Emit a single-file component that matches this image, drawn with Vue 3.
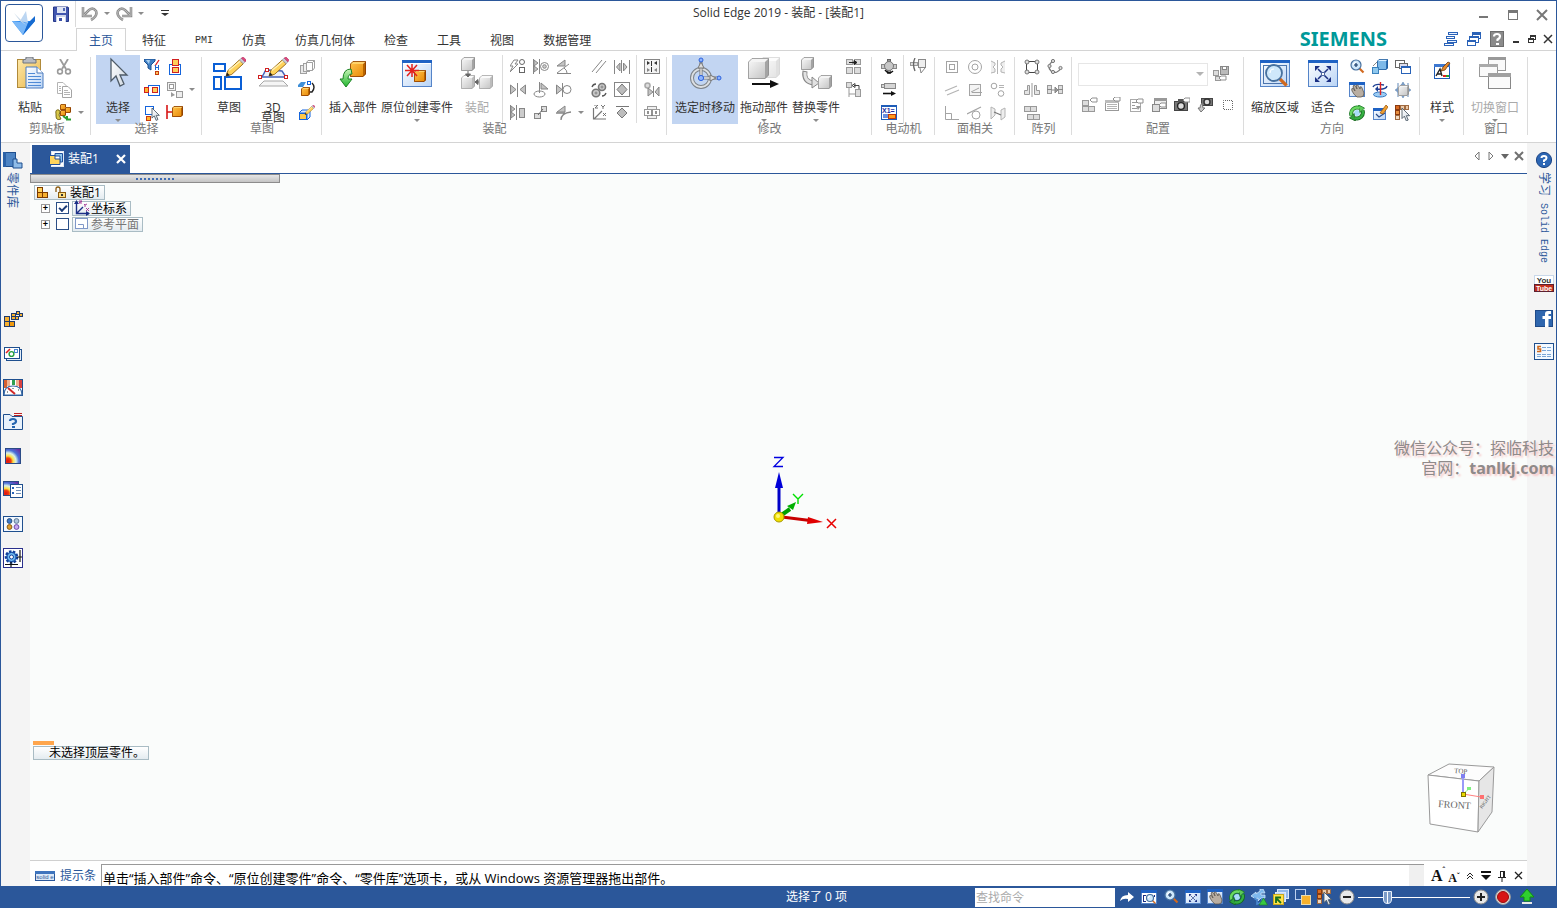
<script setup>
import { h, ref } from 'vue'

/* ---- drawing helpers for the icon set ---- */
const R = (x, y, w, hh, f = 'none', s = 'none', sw = 1) =>
  `<rect x="${s === 'none' ? x : x + sw / 2}" y="${s === 'none' ? y : y + sw / 2}" width="${s === 'none' ? w : w - sw}" height="${s === 'none' ? hh : hh - sw}" fill="${f}" stroke="${s}" stroke-width="${sw}"/>`
const P = (d, f = 'none', s = 'none', sw = 1) => `<path d="${d}" fill="${f}" stroke="${s}" stroke-width="${sw}"/>`
const C = (x, y, r, f = 'none', s = 'none', sw = 1) => `<circle cx="${x}" cy="${y}" r="${r}" fill="${f}" stroke="${s}" stroke-width="${sw}"/>`
const pal = {
  o: ['#ffd36a', 'url(#gO)', '#b86500', '#8a3a00'],
  g: ['#f4f4f4', 'url(#gG)', '#a4a4a4', '#909090'],
  b: ['#d9efff', '#7db9e8', '#2a6fb5', '#1f5c9c'],
  w: ['#fafafa', 'url(#gG)', '#bcbcbc', '#a6a6a6']
}
const cube = (x, y, s, k) => {
  const [a, b, c, d] = pal[k]
  const t = Math.round(s / 5)
  return P(`M${x + t} ${y}H${x + s}L${x + s - t} ${y + t}H${x}z`, a) +
    P(`M${x + s} ${y}V${y + s - t}L${x + s - t} ${y + s}V${y + t}z`, c) +
    P(`M${x} ${y + t}H${x + s - t}V${y + s}H${x}z`, b) +
    P(`M${x + t} ${y + .5}H${x + s - .5}V${y + s - t}L${x + s - t} ${y + s - .5}H${x + .5}V${y + t}z`, 'none', d, .8)
}
const pencil = (x, y, s) => `<g transform="translate(${x} ${y}) scale(${s})">` +
  P('M0 18L2 12L14 1L18 5L6 16z', '#ffd35c', '#9a6a12', 1) + P('M3 12L15 2', 'none', '#fff2b8', 1.4) +
  P('M14 1L16 -1L20 3L18 5z', '#c9c9d6', '#8b8b9b', .6) + P('M16 -1L18 -2L21 1L20 3z', '#e0467c', '#b02a5c', .6) + P('M0 18L1 14L4 17z', '#222') + '</g>'
const win = (x, y, w, hh) => R(x, y, w, hh, 'url(#gB)', '#5584c8') + R(x, y, w, 3, '#1f62c4')
const lens = (x, y, r, k) => P(`M${x + r * .7} ${y + r * .7}L${x + r * .7 + k} ${y + r * .7 + k}`, 'none', '#d2691e', r / 2.4) + C(x, y, r, '#cfe8fb', '#47719f', r > 6 ? 1.8 : 1.2) + P(`M${x - r * .5} ${y}A${r * .5} ${r * .5} 0 0 1 ${x} ${y - r * .5}`, 'none', '#fff', 1.2)
const cursor = (x, y, s) => `<g transform="translate(${x} ${y}) scale(${s})">` + P('M0 0V22L5 17L9 27L13 25L9 16H16z', 'url(#gW)', '#4e5b68', 1.3 / Math.sqrt(s)) + '</g>'
const G = '#868686', L = '#b4b4b4'
const tri = (d) => P(d, '#c4c4c4', G)
const tagR = (x, y) => P(`M${x} ${y + 2}L${x + 2} ${y}H${x + 7}V${y + 4}H${x + 2}z`, '#fff', '#8f8f8f')
const swirl = C(8, 8, 3, '#a8dcf8') +
  P('M2.500 10.500A6 6 0 0 1 10.500 3', 'none', '#1c7a26', 4) + P('M9.500 0L15.500 3L11 7.500z', '#5ccb58', '#1c7a26', .8) + P('M2.500 10.500A6 6 0 0 1 10.500 3', 'none', '#6ad862', 2.4) +
  P('M13.500 5.500A6 6 0 0 1 5.500 13', 'none', '#14661c', 4) + P('M6.500 16L.5 13L5 8.500z', '#2ea33a', '#14661c', .8) + P('M13.500 5.500A6 6 0 0 1 5.500 13', 'none', '#35b042', 2.4)
const hand = P('M3 9Q2 6 4 6L6 9L4 4Q5 2.500 6.500 4L8 7L7 3.500Q8.500 2 9.500 4L11 7L11 5Q12.500 4 13 6L15 11Q15 15 12 15H8Q5 13 3 9z', '#b9aea2', '#5c554e', .8)
const fitArrows = (x, y, s) => `<g transform="translate(${x} ${y}) scale(${s})">` + P('M3 3L13 13M13 3L3 13', 'none', '#1b2f83', 1.5) + P('M0 0H5L0 5zM16 0H11L16 5zM0 16H5L0 11zM16 16H11L16 11z', '#1b2f83') + R(6, 6, 4, 4, '#fff', '#4d67a0') + '</g>'

const art = {
  logo: [26, P('M4 6L15 17L12 14L9 11z', '#d5e4f5') + P('M1 11H24L12 25z', '#2d8cf0') + P('M1 11L17 13L12 25z', '#7ab8f8') + P('M15 1L9 11L17 13z', '#bcd6f2') + P('M17 13L24 6V11L12 25z', '#176bd0') + P('M3 3L9 11L15 15z', '#c8d8e8')],
  save: [16, P('M.5 1H15L15.500 2V15.500H.5z', '#4055ae', '#26388a') + R(4, 1, 9, 6, '#dfe5f4') + R(10, 2, 2, 3, '#5168b4') + R(3, 9, 10, 7, '#cdd5ec') + R(4, 11, 8, 5, '#fff') + R(6, 12, 3, 3, '#3c50a8')],
  undo: [18, P('M2 2V11H11M3 10L8 5Q12 2 15 6Q17 11 10 15', 'none', '#8d8d8d', 2.6) + P('M2 2V11H11M3 10L8 5Q12 2 15 6Q17 11 10 15', 'none', '#b9b9b9', 1)],
  redo: [18, P('M16 2V11H7M15 10L10 5Q6 2 3 6Q1 11 8 15', 'none', '#8d8d8d', 2.6) + P('M16 2V11H7M15 10L10 5Q6 2 3 6Q1 11 8 15', 'none', '#b9b9b9', 1)],
  custom: [8, P('M0 .5H8', 'none', '#333', 1) + P('M0 3H8L4 6z', '#333')],
  caret: [6, P('M0 1H6L3 4z', '#8c8c8c')],
  caretl: [8, P('M0 2H8L4 6z', '#b4b4b4')],
  min: [12, R(1, 7, 9, 2, '#777')],
  max: [12, R(1, 1, 10, 10, 'none', '#777') + R(1, 1, 10, 3, '#777')],
  close: [12, P('M1 1L11 11M11 1L1 11', 'none', '#777', 2)],
  casc1: [16, R(5, 1, 10, 3, '#eaf2ff', '#2a62b8') + R(3, 5, 9, 3, '#fff', '#2a62b8') + R(4, 9, 10, 3, '#eaf2ff', '#2a62b8') + R(1, 12, 10, 3, '#fff', '#2a62b8')],
  casc2: [16, R(6, 1, 9, 7, '#fff', '#2a62b8') + R(6, 1, 9, 3, '#2a62b8') + R(3, 5, 10, 7, '#fff', '#2a62b8') + R(3, 5, 10, 2, '#2a62b8') + R(1, 9, 9, 6, '#fff', '#2a62b8') + R(1, 9, 9, 2, '#2a62b8')],
  help: [16, R(1, 0, 14, 16, '#8b8b8b', '#6d6d6d') + P('M5 5.500Q5 3 8 3Q11 3 11 5.500Q11 7 8.500 8.500V10', 'none', '#fff', 2.2) + R(7, 12, 3, 2, '#fff')],
  min2: [10, R(2, 7, 6, 2, '#333')],
  rest2: [10, R(3, 1, 6, 5, '#fff', '#333') + R(3, 1, 6, 2, '#333') + R(1, 4, 6, 5, '#fff', '#333') + R(1, 4, 6, 2, '#333')],
  close2: [10, P('M1 1L9 9M9 1L1 9', 'none', '#333', 1.5)],

  paste: [32, R(3, 2, 24, 29, 'url(#gClip)', '#b08a3a') + P('M9 6V3L12 2V0H19V2L22 3V6z', '#b9bcc2', '#6f757d') + P('M12 10H23L29 16V31H12z', 'url(#gB)', '#4a7bbd') + P('M23 10V16H29', '#fff', '#4a7bbd') + P('M14 16.500H21M14 19.500H27M14 22.500H27M14 25.500H27M14 28.500H27', 'none', '#4f8ad6')],
  cut: [16, P('M4 0L10 10M12 0L6 10', 'none', '#9b9b9b', 1.8) + C(4, 12.5, 2.4, 'none', '#9b9b9b', 1.6) + C(12, 12.5, 2.4, 'none', '#9b9b9b', 1.6)],
  copy: [16, P('M1.500 .5H7L10.500 4V11.500H1.500z', '#fff', L) + P('M6.500 4.500H12L15.500 8V15.500H6.500z', '#fff', '#a5a5a5') + P('M8 8.500H12M8 10.500H14M8 12.500H14M3 4.500H5M3 6.500H5M3 8.500H5', 'none', L)],
  partcopy: [17, cube(5, 0, 6, 'o') + cube(10, 3, 6, 'o') + cube(5, 6, 6, 'o') + P('M1 10Q0 5 4 6Q6 7 4 11L6 15Q1 17 1 12z', '#d8c84a', '#6b5c10', .9) + P('M8 12L12 15M12 12V15.500H16', 'none', '#2b9e30', 2)],
  cursor: [32, cursor(9, 2, 1)],
  filter: [16, P('M0 0H11V2L7 6V11L4 9V6L0 2z', '#3f7fc4', '#1d4f8e') + P('M2 1H6L5 5z', '#a8d0f2') + P('M15 1L11 7', 'none', '#e02020', 1.3) + P('M11.500 6V11M14.500 6V11M11 8.500H15', 'none', '#1f6ad2') + R(11, 12, 4, 4, '#ffc35c', '#c33c10')],
  selstack: [16, R(2, 5, 12, 11, '#fff', '#1464dc') + R(5, 0, 7, 7, '#ffcf5a', '#d02020') + R(5, 8, 7, 6, '#ffcf5a', '#d02020')],
  selrow: [16, R(4, 3, 12, 11, '#fff', '#1464dc') + R(0, 5, 5, 6, '#ffb62e', '#d02020') + R(8, 5, 6, 6, '#ffcf5a', '#d02020')],
  selgrey: [16, R(0, 0, 9, 9, '#f4f4f4', '#999') + R(2, 2, 5, 5, '#fff', '#999') + R(9, 9, 7, 7, '#eee', '#999') + P('M4 10L8 13L4 15z', '#999')],
  selcur: [16, R(1, 1, 9, 9, '#fff', '#1464dc', 1) + R(2, 11, 5, 5, '#ffb62e', '#c83a10') + cursor(8, 3, .46)],
  selcube: [17, P('M1 1V15M1 8H6', 'none', '#d81616', 1.6) + cube(6, 2, 11, 'o')],
  sketch: [34, R(1, 6, 13, 9, '#fff', '#0a5fd6', 2) + R(1, 19, 9, 14, '#fff', '#0a5fd6', 2) + R(12, 19, 18, 14, '#fff', '#0a5fd6', 2) + pencil(14, 2, .96)],
  sketch3d: [32, P('M7 24H26L31 29H2z', '#f5f5f5', '#a8a8a8') + P('M3 20Q6 20 8 14L12 13L25 14L29 20z', '#eceff8', '#4763b8', 1.4) + R(1, 18, 4, 4, '#fff', '#d02020') + R(27, 18, 4, 4, '#fff', '#d02020') + R(8, 11, 4, 4, '#fff', '#d02020') + pencil(12, 2, .95)],
  greycubes: [16, R(1, 6, 7, 9, '#e8e8e8', '#a0a0a0') + R(4, 4, 7, 9, '#f0f0f0', '#a0a0a0') + P('M7.500 3.500L9 1.500H15.500V9L13.500 11.500H7.500z', '#fff', '#a0a0a0') + P('M7.500 3.500H13.500V11.500M13.500 3.500L15.500 1.500', 'none', '#a0a0a0')],
  convert: [17, P('M0 4L3 1H8L5 6H0z', '#3f8fd8') + R(9, 0, 4, 4, '#fff', '#1464dc') + P('M14 2Q18 6 14 11L12 11', 'none', '#222', 1.4) + cube(3, 6, 9, 'o')],
  sketchbox: [16, R(0, 8, 8, 7, '#ffc94a', '#1464dc') + P('M0 8L3 5H11L8 8zM8 15L11 12V5L8 8z', '#dbe9ff', '#1464dc') + pencil(6, 1, .48)],
  insert: [32, cube(13, 4, 16, 'o') + P('M14 12Q6 12 6 22H3L9 30L15 22H11Q11 17 15 17z', 'url(#gGreen)', '#1c8424')],
  create: [32, win(1, 3, 30, 27) + P('M2 6.500H30', 'none', '#fff') + cube(13, 13, 12, 'o') + P('M11 7V20M4 13.500H18M6 8L16 19M16 8L6 19', 'none', '#e3201b', 1.5)],
  asm: [32, cube(0, 0, 14, 'g') + cube(0, 18, 14, 'w') + cube(18, 18, 14, 'w') + P('M7 14V19M4.500 17H9.500L7 20zM14 25H18M17 22.500V27.500L14 25z', '#666', '#666')],
  flash: [16, P('M4 1L0 7H3L0 13L8 5H5L8 1z', '#fff', G) + C(12, 3, 2.5, '#fff', '#666') + R(9, 8, 6, 6, '#fff', '#666')],
  mateAx: [16, tri('M1 1L5 4L1 7L5 10L1 13z') + P('M.5 0V15M6.500 0V15', 'none', G) + C(11.500, 7.500, 4, '#fff', G) + C(11.500, 7.500, 1.800, '#ccc', G)],
  angle: [16, tri('M1 7L9 1V7z') + P('M1 14.500H15M1 14L13 5M8 9Q11 11 11 14', 'none', G)],
  mate: [16, tri('M.5 3L6 7.500L.5 12z') + tri('M15.500 3L10 7.500L15.500 12z') + P('M7.500 1V15', 'none', G)],
  insertR: [16, tri('M8 1L15 7H8z') + P('M6.500 0V11', 'none', G) + `<ellipse cx="6.500" cy="12" rx="5.500" ry="3" fill="none" stroke="${G}"/>`],
  conn: [16, tri('M.5 3L6 7.500L.5 12z') + C(11, 7.5, 4, '#fff', G) + P('M6.500 1V15', 'none', G)],
  align: [16, tri('M1 1L5 4L1 7L5 10L1 13z') + P('M.5 0V15M6.500 0V15', 'none', G) + R(9, 3, 6, 10, '#ccc', G)],
  rigid: [16, R(1, 8, 7, 6, '#ddd', G) + R(8, 1, 6, 6, '#ddd', G) + P('M5 10L10 4', 'none', '#666')],
  tangent: [16, tri('M1 7L9 1V7z') + P('M0 8H9M5 15Q5 8 15 7', 'none', G, 1.3)],
  par: [16, P('M1 13L11 1M5 14L15 2', 'none', G)],
  gap: [16, P('M.5 1V15M15.500 1V15M7.500 1V14', 'none', G) + tri('M6 4V12L2.500 8zM9.500 4V12L13 8z')],
  gears: [16, C(11, 5, 3.5, '#ccc', '#777', 1.6) + C(5, 11, 3.8, '#ccc', '#777', 1.6) + C(11, 5, 1, '#fff', '#777') + C(5, 11, 1, '#fff', '#777') + P('M1 5Q2 2 5 2M15 11Q14 14 11 14', 'none', '#555', 1.3)],
  cam: [16, R(0, 0, 16, 15, '#fff', G) + P('M8 2L13 7.500L8 13L3 7.500z', '#bdbdbd', '#777')],
  csys: [16, P('M2.500 3V14H15M3 14L11 6', 'none', '#777', 1.2) + P('M3 0H7L4 3H7M10 0L12 2L14 0M12 2V4M12 8L15 11M15 8L12 11', 'none', '#666', .9)],
  path: [16, P('M2 1.500H15', 'none', '#777') + P('M8 3L13 8L8 13L3 8z', '#bdbdbd', '#777')],
  capt: [16, R(0, 0, 16, 15, '#f4f4f4', G) + P('M7.500 2V7M7.500 8V13', 'none', '#333') + P('M3 2V6L6 4zM13 2V6L10 4z', '#333') + P('M3 9V13L6 11zM13 9V13L10 11z', G)],
  gearm: [16, C(3.5, 3.5, 2.5, '#ddd', '#aaa', 1.6) + tri('M4 6L9 10L4 14z') + tri('M15 5L11 10L15 14z') + P('M9.500 4V15', 'none', G)],
  boxm: [16, R(3, 1, 10, 13, '#f0f0f0', '#999') + R(0, 4, 16, 7, '#fff', '#999') + P('M4 6V9M8 5V11M12 6V9', 'none', '#777', 1.6)],
  wheel: [34, C(13, 21, 9, 'none', '#7d838a', 4) + C(13, 21, 9, 'none', '#dcdfe2', 2) + P('M13 3V20M13 21H30', 'none', '#777', 3) + P('M13 5V20M13 21H29', 'none', '#e6e6e6', 1.4) + P('M13 5L16 11H10zM28 21L22 18V24z', '#ddd', '#777') + C(13, 3, 2, '#8db4ff', '#2d62dc') + C(31, 21, 2, '#8db4ff', '#2d62dc') + C(13, 21, 2.6, '#8db4ff', '#2d62dc')],
  drag: [32, `<g opacity=".45">` + cube(11, 0, 21, 'w') + '</g>' + cube(0, 1, 21, 'g') + P('M4 27H24', 'none', '#111', 2) + P('M22 23L31 27L22 31z', '#111')],
  replace: [32, cube(1, 0, 13, 'g') + P('M5 14Q3 25 14 26', 'none', '#888', 5) + P('M5 15Q4 25 14 26', 'none', '#e2e2e2', 3) + P('M12 20L19 26L12 31z', '#e2e2e2', '#888') + cube(18, 18, 14, 'g')],
  move4: [16, R(0, 0, 7, 6, '#ddd', '#999') + R(8, 0, 7, 6, '#ddd', '#999') + R(0, 8, 7, 7, '#ddd', '#999') + R(8, 8, 7, 7, '#ddd', '#999') + P('M3 3.500H9M8 1.500L11 3.500L8 5.500z', '#222', '#222')],
  disp: [16, R(0, 0, 6, 6, '#ddd', '#999') + R(9, 7, 6, 8, '#ddd', '#999') + P('M3 6V15M3 12H9', 'none', '#999') + P('M8 3.500H13V7M9 1.500V5.500L6 3.500z', 'none', '#444')],
  motor1: [16, R(0, 5, 16, 5, '#ccc', '#888') + R(6, 0, 4, 15, '#999', '#666') + C(8, 7, 4.5, '#c8c8c8', '#777') + P('M4 11Q8 16 12 12', 'none', '#111', 1.4)],
  motor2: [16, R(3, 1, 12, 6, '#d5d5d5', '#888') + R(0, 2, 4, 4, '#d5d5d5', '#888') + P('M2 11.500H11', 'none', '#111', 1.6) + P('M10 9L15 11.500L10 14z', '#111')],
  vars: [16, R(0, 0, 16, 15, '#fff', '#1e5cb8') + R(0, 0, 16, 2, '#1e5cb8') + '<text x="1" y="8" font-size="7" font-weight="700" font-family="Liberation Sans" fill="#1b2fa0">X1=</text>' + R(2, 9, 5, 4, '#6a8fe0') + R(7, 9, 8, 5, '#ff9d1c', '#c03b0c')],
  motor3: [17, R(0, 4, 8, 4, '#ddd', '#999') + P('M5 0Q2 6 5 13', 'none', '#666', 1.3) + R(8, 1, 8, 9, '#eee', '#888') + P('M10 10L11 15L15 10', 'none', '#888')],
  f1: [16, R(2, 2, 12, 12, '#fff', '#a4a4a4') + R(5, 5, 6, 6, '#fff', '#a4a4a4')],
  f2: [16, C(8, 8, 6.5, '#fff', '#a4a4a4') + C(8, 8, 3, '#fff', '#a4a4a4')],
  f3: [16, P('M1 2L5 4V6L3 8L5 10V13L1 14M15 2L11 4V6L13 8L11 10V13L15 14', '#eee', L) + P('M7.500 1V15', 'none', L)],
  f4: [16, P('M1 9L13 4M3 13L15 8', 'none', L, 1.2)],
  f5: [16, R(2, 2, 12, 12, '#f4f4f4', '#a4a4a4') + P('M4 10L12 6M5 10.500H15', 'none', '#a4a4a4')],
  f6: [16, C(4, 4, 2.8, '#fff', '#a4a4a4') + C(11, 11.5, 2.8, '#fff', '#a4a4a4') + P('M9 3.500H14M9 5.500H14', 'none', L)],
  f7: [16, P('M1.500 1V14.500H15M2 8.500H7.500V14', 'none', '#a4a4a4')],
  f8: [16, P('M0 9L14 2', 'none', '#a4a4a4', 1.2) + C(9, 10, 4, '#fff', '#a4a4a4')],
  f9: [16, P('M1 2L5 4V10L1 14zM15 3L11 5V15L15 12z', '#eee', L) + P('M4 7L11 10', 'none', '#777', 1.3)],
  p1: [16, P('M2.500 2.500H13.500V13.500H2.500z', 'none', '#444') + C(3, 3, 2, '#ddd', '#777') + C(13, 3, 2, '#ddd', '#777') + C(3, 13, 2, '#ddd', '#777') + C(13, 13, 2, '#ddd', '#777')],
  p2: [16, P('M6 2Q-1 7 4 12Q10 16 14 9', 'none', '#777', 1.2) + C(6, 2, 1.6, '#ddd', '#777') + C(2.500, 7, 1.6, '#ddd', '#777') + C(6, 13, 1.6, '#ddd', '#777') + C(13.500, 9, 1.6, '#ddd', '#777')],
  p3: [16, P('M3.500 3.500H5.500V12.500H.5V8.500H3.500zM12.500 3.500H10.500V12.500H15.500V8.500H12.500z', '#e4e4e4', '#999') + P('M8 1V15', 'none', '#999')],
  p4: [16, R(0, 3, 5, 9, '#ddd', '#999') + R(11, 3, 5, 9, '#ddd', '#999') + P('M5 8H9M8 5L11 8L8 11zM0 7.500H5M11 7.500H16', '#999', '#888')],
  p5: [16, R(0, 1, 7, 6, '#ddd', '#999') + R(6, 1, 7, 6, '#ddd', '#999') + R(3, 9, 7, 6, '#ddd', '#999') + R(9, 9, 7, 6, '#ddd', '#999')],
  c0: [16, R(0, 4, 6, 6, '#ddd', '#999') + R(2, 10, 6, 5, '#ddd', '#999') + R(7, 0, 9, 9, '#bbb', '#888') + R(9, 0, 5, 4, '#fff', '#888') + tagR(6, 10)],
  c1: [16, R(0, 3, 7, 6, '#ddd', '#999') + R(0, 9, 7, 6, '#ddd', '#999') + R(6, 9, 7, 6, '#ddd', '#999') + tagR(8, 1)],
  c2: [16, R(0, 3, 14, 11, '#fff', '#999') + R(0, 3, 14, 3, '#bbb') + P('M2 7.500H12M2 9.500H12M2 11.500H12', 'none', L) + tagR(8, 0)],
  c3: [16, R(2, 2, 11, 13, '#fff', '#aaa') + P('M4 5.500H10M4 8.500H7M4 11.500H9', 'none', '#999') + tagR(8, 2) + P('M8 9L13 9L10 13z', '#999')],
  c4: [16, R(3, 1, 13, 11, '#eee', '#888') + R(3, 1, 13, 3, '#999') + R(1, 7, 8, 8, '#ddd', '#888') + tagR(8, 6)],
  c5: [16, R(0, 4, 14, 10, '#777', '#444') + R(4, 2, 5, 3, '#555') + C(7, 9, 3.4, '#ddd', '#222', 1.4) + tagR(9, 1)],
  c6: [16, R(4, 1, 12, 8, '#777', '#444') + C(10, 5, 3, '#ddd', '#333', 1.4) + P('M5 6Q3 8 3 11H1L4 15L8 11H6z', '#c8c8c8', '#777')],
  c7: [16, `<rect x="3.500" y="3.500" width="9" height="9" fill="none" stroke="#666" stroke-dasharray="1 1" stroke-dashoffset=".5"/>`],
  zoomarea: [32, win(1, 3, 30, 27) + R(4, 8, 24, 19, 'none', '#4b74ad') + lens(15, 16, 8, 7)],
  fit: [32, win(1, 3, 30, 27) + fitArrows(8, 9, 1)],
  zoom: [16, lens(7, 6, 5, 4) + P('M5 6H9M7 4V8', 'none', '#183a68', 1.2)],
  view: [16, cube(5, 0, 11, 'b') + R(0, 8, 7, 7, '#8fc8ee', '#3b82bc') + P('M1 7L5 3', 'none', '#888')],
  wins: [16, R(0, 1, 10, 8, '#fff', '#666') + R(4, 4, 9, 6, '#dde', '#666') + R(6, 7, 10, 8, '#fff', '#2862b8') + R(6, 7, 10, 2, '#2862b8')],
  pan: [16, win(0, 0, 16, 15) + hand],
  rot: [16, P('M1 5Q3 1 12 3M15 4Q14 8 4 7', 'none', '#1c3f93', 1.4) + `<ellipse cx="8" cy="12.500" rx="6.500" ry="2.500" fill="#9cccf2" stroke="#2f75c0"/>` + P('M8.500 0V13', 'none', '#e02020', 1.4) + P('M3 7L6 4V10z', '#1c3f93')],
  spin: [16, P('M3 1V15M13 1V15M0 8H16M8 0V16', 'none', '#7b9cc4', 1.2) + P('M0 8L3 5V11zM16 8L13 5V11zM8 0L5.500 3H10.500zM8 16L5.500 13H10.500z', '#7b9cc4') + cube(3, 3, 11, 'g')],
  refresh: [16, swirl],
  sketchview: [16, win(1, 3, 13, 12) + P('M4 9L7 12L13 8', 'none', '#274b8b', 1.2) + P('M8 8L14 0L16 2L11 9z', '#f0a030', '#a25c10', .8)],
  selview: [16, R(0, 0, 5, 5, '#d86a20', '#8a3a10') + R(5, 0, 5, 5, '#ecc9a8', '#a06a40') + R(10, 0, 4, 5, '#ecc9a8', '#a06a40') + R(0, 5, 5, 5, '#e89040', '#8a3a10') + R(0, 10, 5, 5, '#f3dcc4', '#a06a40') + cursor(7, 3, .48)],
  style: [32, R(8, 7, 16, 15, '#fff', '#1e5cb8') + R(8, 7, 16, 3, '#3d78d0') + P('M10 19L14 12L16 19M11 17H15', 'none', '#222', 1.4) + R(17, 18, 3, 2, '#e02020') + R(20, 18, 3, 2, '#20a030') + P('M15 14L17 10L22 5L24 6L19 13z', '#e58a2c', '#6b3a10', .8)],
  switch: [32, R(9, 0, 18, 14, '#fafafa', '#999') + R(9, 0, 18, 3, '#999') + R(0, 7, 19, 13, '#fafafa', '#999') + R(0, 7, 19, 3, '#aaa') + R(9, 16, 23, 16, '#fafafa', '#888') + R(9, 16, 23, 4, '#a0a0a0')],

  lib: [20, R(0, 2, 13, 15, '#4d84c4', '#1f4f8e') + R(0, 2, 3, 15, '#2b62a8') + P('M10 9H14V13H19V18H10z', '#8fbce8', '#1f4f8e')],
  parts: [20, R(1, 6, 6, 6, '#f6b030', '#1f3a6c') + R(1, 11, 6, 6, '#f6b030', '#1f3a6c') + R(6, 11, 6, 6, '#f09a10', '#1f3a6c') + R(8, 3, 5, 4, '#f6b030', '#1f3a6c') + R(8, 6, 5, 4, '#f6b030', '#1f3a6c') + R(12, 6, 4, 4, '#f6b030', '#1f3a6c') + R(13, 1, 4, 4, '#f6b030', '#1f3a6c') + R(16, 3, 4, 4, '#f6b030', '#1f3a6c')],
  family: [20, R(3, 5, 16, 12, '#e4edf8', '#1f4f8e') + R(1, 3, 16, 12, '#fff', '#1f4f8e') + P('M3 9L7 5', 'none', '#e02020', 1.6) + C(8.5, 10, 2.4, '#fff', '#28a040', 1.4) + R(11, 5, 4, 4, '#fff', '#4a86d0')],
  gauge: [20, R(0, 1, 20, 17, '#fff', '#1f4f8e') + R(1, 2, 3, 8, '#d86030') + R(4, 2, 3, 6, '#f0b090') + R(9, 2, 3, 5, '#30a050') + R(13, 2, 3, 6, '#f0b090') + R(16, 2, 3, 8, '#d84040') + P('M1 17Q1 8 10 8Q19 8 19 17z', '#fff', '#3c6ca8', 1.2) + P('M5 10L12 16', 'none', '#d02828', 2) + P('M4 14L5 14M10 10V11M15 12L16 12', 'none', '#333')],
  folder: [20, P('M.5 2.500H7L9 4.500H19.500V17.500H.5z', '#e8f1fb', '#1f4f8e') + P('M11 1.500H19M11 3.500H19', 'none', '#c02020') + P('M7 9Q7 7 10 7Q13 7 13 9.500Q13 11 10 12V13', 'none', '#2465b0', 2.2) + R(9, 14, 3, 2, '#2465b0')],
  heat: [16, R(0, 0, 16, 16, 'url(#gHeat)', '#2b4a86')],
  heatlist: [20, R(0, 1, 16, 15, 'url(#gHeat)', '#2b4a86') + R(7, 4, 13, 14, '#fff', '#1f4f8e') + P('M13 7.500H18M13 10.500H18M13 13.500H18', 'none', '#6f8fb8') + R(9, 7, 2, 2, '#2862b8') + R(9, 12, 2, 2, '#2862b8')],
  dots: [20, R(0, 2, 20, 16, '#f3f8ff', '#1f4f8e') + C(6.5, 7, 2.4, '#3e78c8', '#27507f') + C(13.5, 7, 2.4, '#aec4dc', '#5f7a96') + C(6.5, 13, 2.4, '#e0a030', '#8a5a10') + C(13.5, 13, 2.4, '#c8a8f0', '#6a48a8')],
  gearb: [20, R(0, 0, 20, 20, '#fff', '#2a2f8c') + `<circle cx="8.500" cy="9" r="5.500" fill="#5bb0ee" stroke="#12409a" stroke-width="2.600" stroke-dasharray="2.400 1.400"/>` + C(8.5, 9, 4.5, '#6fbcf2', '#12409a') + C(8.5, 9, 2, '#fff', '#12409a') + P('M17 2V14M14 9H19M2 16.500H15M8 14V19', 'none', '#111', 1.2)],
  q: [16, C(8, 8, 7.6, '#2c66b4', '#1d4584') + P('M5.500 6Q5.500 4 8 4Q10.500 4 10.500 6Q10.500 7.500 8 8.500V10', 'none', '#fff', 2) + R(7, 11, 2, 2, '#fff')],
  yt: [20, R(0, 1, 20, 17, '#fff', '#c9d8ea') + R(0, 10, 20, 8, '#c4301c', '#5c2030') + '<text x="10" y="9" text-anchor="middle" font-size="8" font-weight="700" font-family="Liberation Sans" fill="#333">You</text><text x="10" y="17" text-anchor="middle" font-size="7" font-weight="700" font-family="Liberation Sans" fill="#fff">Tube</text>'],
  fb: [18, R(0, 1, 18, 17, '#2f66ae', '#1f4a88') + P('M10 18V10H7.500V7H10V5Q10 2 13 2H16V5H13.500V7H16V10H13.500V18z', '#fff')],
  news: [20, R(0, 1, 20, 17, '#f3f9ff', '#1f4f8e') + P('M7 4.500H4V7H6.500V9.500H3', 'none', '#d0691c', 1.6) + P('M8 5.500H12M13 5.500H17M8 8.500H12M13 8.500H17M3 12.500H7M8 12.500H12M13 12.500H17M3 14.500H7M8 14.500H12M13 14.500H17', 'none', '#7aa6d6')],
  doctab: [16, R(2, 0, 13, 16, '#fff', '#dfe8f4') + P('M6 2.500H13.500V11H11V5H6z', '#8fc8f0', '#1f4f9c') + P('M.5 4.500H6V8H11V13.500H.5z', '#ffd45c', '#1f4f9c')],
  tclose: [10, P('M1 1L9 9M9 1L1 9', 'none', '#fff', 2.2)],
  prev: [8, P('M6 0V8L2 4z', '#fff', '#777')],
  next: [8, P('M2 0V8L6 4z', '#fff', '#777')],
  down: [8, P('M0 2H8L4 7z', '#666')],
  vclose: [10, P('M1 1L9 9M9 1L1 9', 'none', '#707070', 2)],
  tasm: [13, R(1, 1, 6, 6, '#ffd45c', '#7a3a00') + R(1, 6, 6, 6, '#f6b030', '#7a3a00') + R(6, 6, 6, 6, '#f6b030', '#7a3a00')],
  lock: [13, P('M2 6V3Q2 1 4 1Q6 1 6 3V6', 'none', '#8a5a10', 1.3) + R(4, 6, 8, 6, '#ffdf80', '#8a5a10') + R(7, 8, 2, 2, '#333')],
  taxes: [16, P('M2.500 2V13.500H15M3 13L9 7', 'none', '#1c2f86', 1.4) + P('M0 4L2.500 0L5 4zM12 11V16L16 13.500z', '#1c2f86') + P('M5 1H8L5 3H8M10 4L11 5L13 4M11 5V7M12 8L15 11M15 8L12 11', 'none', '#a03090', .9)],
  tplane: [16, R(1, 2, 13, 11, '#fff', '#8098c8') + P('M4 8.500H9.500V13', 'none', '#8098c8')],
  sedge: [20, R(0, 5, 20, 10, '#dce9f8', '#2b579a') + R(0, 5, 20, 3, '#3f74bd') + '<text x="10" y="13" text-anchor="middle" font-size="6" font-family="Liberation Sans" fill="#2b579a">solid e</text>'],
  dblup: [8, P('M1 4L4 1L7 4M1 7L4 4L7 7', 'none', '#222')],
  bardown: [10, R(0, 0, 10, 2, '#111') + P('M0 4H10L5 9z', '#111')],
  pin: [12, P('M4 1.500H8M4.500 1V7M2 7.500H10M6 8V12', 'none', '#222') + R(7, 1, 2, 6, '#222')],
  xs: [9, P('M1 1L8 8M8 1L1 8', 'none', '#222', 1.3)],
  go: [16, P('M1 12Q2 6 9 6V3L15 8L9 13V10Q4 9 1 12z', '#fff')],
  bzoom: [16, R(0, 1, 16, 14, '#fff', '#5584c8') + R(0, 1, 16, 3, '#1f62c4') + P('M2.500 6V12M2 6.500H5M2 12.500H5M13.500 6V8', 'none', '#1b2f83') + lens(9, 9, 3.5, 3)],
  bfit: [16, win(0, 1, 16, 14) + fitArrows(4, 5, .5)],
  part3: [17, P('M0 7L5 3V5L9 2V0H12L14 4H10V6H14V9H10L7 12V9L5 10z', '#7db8ee', '#cfe6fa', .8) + P('M3 9L6 11V15L11 13V9', 'none', '#4a8ad0', 1.6) + P('M8 16L12.500 9L16.500 16z', '#37c840', '#1c7a26', .6)],
  bstack: [16, R(4, 0, 12, 10, '#8fb8ec', '#dbe8fa') + R(2, 3, 11, 10, '#bcd6f5', '#dbe8fa') + R(0, 5, 11, 11, '#ffe24a', '#c9a81c') + P('M8 14L4 10M3 14V8.500H8', 'none', '#18701c', 1.8)],
  bsq: [16, R(0, 0, 11, 11, 'none', '#bcd0ee') + R(6, 6, 10, 10, '#f8b22c', '#e8dcb0')],
  minus: [16, C(8, 8, 7, '#e8e8e8', '#888') + R(4, 7, 8, 2, '#222')],
  plus: [16, C(8, 8, 7, '#e8e8e8', '#888') + R(4, 7, 8, 2, '#222') + R(7, 4, 2, 8, '#222')],
  rec: [16, C(8, 8, 7.4, '#d9d9d9', '#999') + C(8, 8, 5.5, '#d81414', '#9c0a0a')],
  up: [16, P('M8 0L15 8H11V12H5V8H1z', '#2fd02f', '#138a13') + R(3, 13, 10, 2, '#e8e8e8')]
}

const Ico = (props) => {
  const [s, body] = art[props.n]
  return h('svg', { width: s, height: s, viewBox: `0 0 ${s} ${s}`, fill: 'none', 'aria-hidden': 'true', innerHTML: body })
}
Ico.props = ['n']

const tabs = ['主页', '特征', 'PMI', '仿真', '仿真几何体', '检查', '工具', '视图', '数据管理']
const big = (icon, text, w, o = {}) => ({ t: 'big', icon, text, w, ...o })
const col = (...icons) => ({ t: 'col', icons })
const groups = [
  { id: 'clip', label: '剪贴板', items: [big('paste', '粘贴', 44), col('cut', 'copy', 'partcopy'), { t: 'caret', low: true }] },
  { id: 'select', label: '选择', items: [big('cursor', '选择', 44, { on: true, caret: true }), col('filter', 'selrow', 'selcur'), col('selstack', 'selgrey', 'selcube'), { t: 'caret' }] },
  { id: 'sketch', label: '草图', items: [big('sketch', '草图', 44), big('sketch3d', '3D\n草图', 44, { two: true }), col('greycubes', 'convert', 'sketchbox')] },
  { id: 'asm', label: '装配', items: [big('insert', '插入部件', 52), big('create', '原位创建零件', 76, { caret: true }), big('asm', '装配', 44, { off: true }), { t: 'sep' }, col('flash', 'mate', 'align'), col('mateAx', 'insertR', 'rigid'), col('angle', 'conn', 'tangent'), { t: 'caret', low: true }, col('par', 'gears', 'csys'), col('gap', 'cam', 'path'), { t: 'sep' }, col('capt', 'gearm', 'boxm')] },
  { id: 'modify', label: '修改', items: [big('wheel', '选定时移动', 66, { on: true }), big('drag', '拖动部件', 52, { caret: true }), big('replace', '替换零件', 52, { caret: true }), col('move4', 'disp')] },
  { id: 'motor', label: '电动机', items: [col('motor1', 'motor2', 'vars'), { t: 'sep' }, col('motor3')] },
  { id: 'face', label: '面相关', items: [col('f1', 'f4', 'f7'), col('f2', 'f5', 'f8'), col('f3', 'f6', 'f9')] },
  { id: 'array', label: '阵列', items: [col('p1', 'p3', 'p5'), col('p2', 'p4')] },
  { id: 'config', label: '配置', items: [{ t: 'config' }] },
  { id: 'view', label: '方向', items: [big('zoomarea', '缩放区域', 52), big('fit', '适合', 44), col('zoom', 'pan', 'refresh'), col('view', 'rot', 'sketchview'), col('wins', 'spin', 'selview')] },
  { id: 'style', label: '', items: [big('style', '样式', 44, { caret: true })] },
  { id: 'window', label: '窗口', items: [big('switch', '切换窗口', 52, { off: true, caret: true })] }
]
const leftTools = ['parts', 'family', 'gauge', 'folder', 'heat', 'heatlist', 'dots', 'gearb']
const rightTools = ['yt', 'fb', 'news']
const statusTools = ['go', 'bzoom', 'zoom', 'bfit', 'pan', 'refresh', 'part3', 'bstack', 'bsq', 'selview', 'minus']
const csysOn = ref(true)
const planeOn = ref(false)
const zoomLevel = ref(24)
</script>

<template>
  <div class="app">
    <svg class="defs" width="0" height="0" aria-hidden="true">
      <defs>
        <linearGradient id="gB" x1="0" y1="0" x2="1" y2="1"><stop offset="0" stop-color="#fff" /><stop offset="1" stop-color="#b9d4f6" /></linearGradient>
        <linearGradient id="gO" x1="0" y1="0" x2="1" y2="1"><stop offset="0" stop-color="#ffc048" /><stop offset="1" stop-color="#e88a08" /></linearGradient>
        <linearGradient id="gG" x1="0" y1="0" x2="1" y2="1"><stop offset="0" stop-color="#f6f6f6" /><stop offset="1" stop-color="#c4c4c4" /></linearGradient>
        <linearGradient id="gClip" x1="0" y1="0" x2="1" y2="1"><stop offset="0" stop-color="#ffe9a8" /><stop offset="1" stop-color="#e8b54a" /></linearGradient>
        <linearGradient id="gW" x1="0" y1="0" x2="1" y2="1"><stop offset="0" stop-color="#fff" /><stop offset="1" stop-color="#cfd8e2" /></linearGradient>
        <linearGradient id="gGreen" x1="0" y1="0" x2="0" y2="1"><stop offset="0" stop-color="#c8f5b8" /><stop offset="1" stop-color="#1fb52c" /></linearGradient>
        <radialGradient id="gHeat" cx=".15" cy=".85" r="1.1"><stop offset="0" stop-color="#e01010" /><stop offset=".2" stop-color="#f04010" /><stop offset=".32" stop-color="#ffe040" /><stop offset=".5" stop-color="#d8f0e8" /><stop offset=".68" stop-color="#4a70d8" /><stop offset="1" stop-color="#6a2aa0" /></radialGradient>
      </defs>
    </svg>

    <header class="head">
      <button class="logo" aria-label="应用程序菜单"><Ico n="logo" /></button>
      <div class="titlebar">
        <div class="quick">
          <button class="q-save" aria-label="保存"><Ico n="save" /></button>
          <button class="q-ur" aria-label="撤消"><Ico n="undo" /></button>
          <button class="q-car" aria-label="撤消列表"><Ico n="caret" /></button>
          <button class="q-ur" aria-label="重做"><Ico n="redo" /></button>
          <button class="q-car" aria-label="重做列表"><Ico n="caret" /></button>
          <button class="q-cust" aria-label="自定义"><Ico n="custom" /></button>
        </div>
        <h1>Solid Edge 2019 - 装配 - [装配1]</h1>
        <div class="winctl">
          <button aria-label="最小化"><Ico n="min" /></button>
          <button aria-label="最大化"><Ico n="max" /></button>
          <button aria-label="关闭"><Ico n="close" /></button>
        </div>
      </div>
      <nav class="tabs">
        <button v-for="(t, i) in tabs" :key="t" :class="{ active: i === 0, latin: t === 'PMI' }">{{ t }}</button>
        <span class="brand">SIEMENS</span>
        <button class="sub" aria-label="层叠"><Ico n="casc1" /></button>
        <button class="sub" aria-label="平铺"><Ico n="casc2" /></button>
        <button class="sub" aria-label="帮助"><Ico n="help" /></button>
        <button class="sub small" aria-label="最小化文档"><Ico n="min2" /></button>
        <button class="sub small" aria-label="还原文档"><Ico n="rest2" /></button>
        <button class="sub small" aria-label="关闭文档"><Ico n="close2" /></button>
      </nav>
    </header>

    <section class="ribbon">
      <div v-for="g in groups" :key="g.id" class="group" :class="'g-' + g.id">
        <div class="g-body">
          <template v-for="(it, i) in g.items" :key="i">
            <button v-if="it.t === 'big'" class="big" :class="['w' + it.w, { on: it.on, off: it.off, two: it.two }]">
              <span class="pic"><Ico :n="it.icon" /></span>
              <span class="cap">{{ it.text }}</span>
              <Ico v-if="it.caret" n="caret" class="bcaret" />
            </button>
            <div v-else-if="it.t === 'col'" class="col">
              <button v-for="n in it.icons" :key="n" class="mini" :aria-label="n"><Ico :n="n" /></button>
            </div>
            <button v-else-if="it.t === 'caret'" class="car" :class="{ low: it.low }" aria-label="更多"><Ico n="caret" /></button>
            <span v-else-if="it.t === 'sep'" class="sep"></span>
            <div v-else class="config">
              <div class="c-row">
                <span class="combo"><select aria-label="配置" disabled><option></option></select><Ico n="caretl" /></span>
                <button class="mini" aria-label="保存配置"><Ico n="c0" /></button>
              </div>
              <div class="c-row">
                <button v-for="n in 7" :key="n" class="mini" :aria-label="'配置 ' + n"><Ico :n="'c' + n" /></button>
              </div>
            </div>
          </template>
        </div>
        <div class="g-label">{{ g.label }}</div>
      </div>
    </section>

    <main class="work">
      <aside class="side left">
        <button class="s-top" aria-label="零件库"><Ico n="lib" /></button>
        <button class="s-text">零件库</button>
        <div class="s-list">
          <button v-for="n in leftTools" :key="n" :aria-label="n"><Ico :n="n" /></button>
        </div>
      </aside>

      <div class="center">
        <div class="doctabs">
          <div class="doctab">
            <Ico n="doctab" /><span>装配1</span>
            <button aria-label="关闭装配1"><Ico n="tclose" /></button>
          </div>
          <div class="docctl">
            <button aria-label="上一个"><Ico n="prev" /></button>
            <button aria-label="下一个"><Ico n="next" /></button>
            <button aria-label="列表"><Ico n="down" /></button>
            <button aria-label="关闭"><Ico n="vclose" /></button>
          </div>
        </div>

        <div class="canvas">
          <div class="grip"><i v-for="n in 10" :key="n"></i></div>
          <ul class="tree">
            <li><span class="node"><Ico n="tasm" /><Ico n="lock" class="gap" />装配1</span></li>
            <li class="kid">
              <button class="exp" aria-label="展开坐标系">+</button>
              <input id="t1" v-model="csysOn" type="checkbox" />
              <label for="t1" class="node"><Ico n="taxes" />坐标系</label>
            </li>
            <li class="kid">
              <button class="exp" aria-label="展开参考平面">+</button>
              <input id="t2" v-model="planeOn" type="checkbox" />
              <label for="t2" class="node dim"><Ico n="tplane" />参考平面</label>
            </li>
          </ul>

          <svg class="axes" width="130" height="130" viewBox="0 0 130 130" fill="none" aria-hidden="true">
            <path d="M65 62V34" stroke="#0000c8" stroke-width="3" />
            <path d="M65 20L69 36H61z" fill="#0000d8" />
            <path d="M60 5.500H69L60 14.500H69" stroke="#0000e0" stroke-width="1.300" />
            <path d="M66 64L76 57" stroke="#00a000" stroke-width="4" />
            <path d="M82 50L79 58L73 54z" fill="#00b000" />
            <path d="M79 42L84 47L89 42M84 47V52" stroke="#00e000" stroke-width="1.400" />
            <path d="M68 65L96 68.500" stroke="#c80000" stroke-width="3" />
            <path d="M94 65L109 70L93 72z" fill="#e00000" />
            <path d="M113 67L122 76M122 67L113 76" stroke="#e80000" stroke-width="1.500" />
            <circle cx="65" cy="65" r="5" fill="#f0e000" stroke="#a89800" />
            <circle cx="64" cy="64" r="2" fill="#fff87a" />
          </svg>

          <div class="note">
            <i></i>
            <p>未选择顶层零件。</p>
          </div>

          <svg class="cube" width="70" height="72" viewBox="0 0 70 72" aria-hidden="true">
            <g stroke="#9a9a9a" stroke-linejoin="round">
              <path d="M1 12L22 1L67 4L52 18z" fill="#fdfdfd" />
              <path d="M1 12L52 18L51 69L3 61z" fill="#fff" />
              <path d="M52 18L67 4L65 49L51 69z" fill="#e6e6e6" />
            </g>
            <text x="11" y="44" font-size="10" font-family="Liberation Serif" fill="#666" transform="rotate(4 11 44)">FRONT</text>
            <text x="27" y="10" font-size="7" font-family="Liberation Serif" fill="#555" transform="rotate(4 27 10)">TOP</text>
            <text x="55" y="46" font-size="5" font-family="Liberation Serif" fill="#555" transform="rotate(-54 55 46)">RIGHT</text>
            <path d="M36 30V14" stroke="#9a9af8" stroke-width="2" />
            <rect x="34" y="11" width="4" height="4" fill="#8080f0" />
            <path d="M36 31L54 34" stroke="#ff8080" />
            <rect x="53" y="32" width="4" height="4" fill="#ff7070" />
            <path d="M37 30L42 26" stroke="#90f090" />
            <rect x="40" y="24" width="4" height="3" fill="#80f080" />
            <rect x="34.500" y="29.500" width="4" height="4" fill="#e8d800" stroke="#807000" />
          </svg>
        </div>

        <div class="prompt">
          <span class="p-title"><Ico n="sedge" />提示条</span>
          <p class="p-text">单击“插入部件”命令、“原位创建零件”命令、“零件库”选项卡，或从 Windows 资源管理器拖出部件。</p>
          <span class="p-thumb"></span>
          <div class="p-ctl">
            <button class="fa" aria-label="增大字体">A<sup>ˆ</sup></button>
            <button class="fa sm" aria-label="减小字体">A<sup>ˇ</sup></button>
            <button aria-label="收起"><Ico n="dblup" /></button>
            <button aria-label="选项"><Ico n="bardown" /></button>
            <button aria-label="固定"><Ico n="pin" /></button>
            <button aria-label="关闭提示条"><Ico n="xs" /></button>
          </div>
        </div>
      </div>

      <aside class="side right">
        <button class="s-top" aria-label="学习 Solid Edge"><Ico n="q" /></button>
        <button class="s-text">学习 <span>Solid Edge</span></button>
        <div class="s-list">
          <button v-for="n in rightTools" :key="n" :aria-label="n"><Ico :n="n" /></button>
        </div>
      </aside>

      <div class="mark">微信公众号：探临科技<br />官网：<b>tanlkj.com</b></div>
    </main>

    <footer class="status">
      <span class="s-msg">选择了 0 项</span>
      <input class="find" type="text" placeholder="查找命令" aria-label="查找命令" />
      <button v-for="n in statusTools" :key="n" class="st" :aria-label="n"><Ico :n="n" /></button>
      <input v-model="zoomLevel" class="zoom" type="range" min="0" max="100" aria-label="缩放" />
      <button class="st" aria-label="放大"><Ico n="plus" /></button>
      <button class="st" aria-label="录制"><Ico n="rec" /></button>
      <button class="st last" aria-label="上传"><Ico n="up" /></button>
    </footer>
  </div>
</template>

<style>
html, body { margin: 0; height: 100%; }
</style>

<style scoped>
.app {
  box-sizing: border-box; height: 100vh; display: flex; flex-direction: column; overflow: hidden;
  border: 1px solid #2b579a; border-bottom: 0; background: #fff; color: #333;
  font: 12px/16px "Open Sans", "Noto Sans CJK SC", sans-serif;
}
.defs { position: absolute; }
.app svg { display: block; flex: none; }
button { margin: 0; padding: 0; border: 0; background: none; font: inherit; color: inherit; display: flex; align-items: center; justify-content: center; flex: none; }
h1, p, ul { margin: 0; padding: 0; font: inherit; }

.head { position: relative; flex: none; border-bottom: 1px solid #d4d4d4; }
.logo { position: absolute; left: 4px; top: 3px; width: 38px; height: 38px; border: 1px solid #2b579a; border-radius: 4px; background: #fff; }
.titlebar { display: grid; grid-template-columns: 1fr auto 1fr; height: 27px; }
.quick { display: flex; align-items: center; padding-left: 51px; height: 26px; }
.q-save { width: 24px; height: 26px; padding-right: 5px; border-right: 1px solid #dadada; }
.q-ur { width: 28px; }
.q-car { width: 6px; }
.q-cust { width: 42px; }
.titlebar h1 { line-height: 23px; color: #333; }
.winctl { display: flex; justify-content: flex-end; height: 28px; }
.winctl button { width: 29px; }
.tabs { display: flex; align-items: stretch; height: 22px; padding-left: 75px; }
.tabs > button:not(.sub) { padding: 3px 15px 0 14px; color: #333; }
.tabs > button.active { padding: 2px 12px 0; margin: 0 2px -1px 0; border: 1px solid #d4d4d4; border-bottom: 0; background: #fff; color: #2b579a; }
.tabs > button.latin { font: 10px/16px "Liberation Mono", monospace; }
.brand { margin-left: auto; margin-right: 52px; color: #099; font: 700 20px/22px "Noto Sans", sans-serif; }
.sub { width: 23px; }
.sub.small { width: 16px; }

.ribbon { display: flex; flex: none; height: 87px; padding-top: 4px; border-bottom: 1px solid #d4d4d4; }
.group { box-sizing: border-box; flex: none; padding-left: 5px; height: 82px; background: linear-gradient(#dcdcdc, #dcdcdc) no-repeat right top 2px / 1px 78px; }
.g-clip { width: 90px; padding-left: 7px; }
.g-select { width: 111px; }
.g-sketch { width: 120px; }
.g-asm { width: 345px; }
.g-modify { width: 205px; }
.g-motor { width: 63px; }
.g-face { width: 80px; }
.g-array { width: 57px; }
.g-config { width: 172px; }
.g-view { width: 176px; }
.g-style { width: 44px; padding-left: 0; }
.g-window { width: 64px; }
.g-body { display: flex; height: 66px; }
.g-label { position: relative; margin-left: -5px; text-align: center; color: #777; line-height: 16px; }
.big { flex-direction: column; justify-content: flex-start; height: 69px; padding-top: 2px; white-space: pre; }
.w44 { width: 44px; }
.w52 { width: 52px; }
.w66 { width: 66px; }
.w76 { width: 76px; }
.big.on { background: #c2d5f2; }
.big.off { color: #aaa; }
.pic { display: flex; flex: none; align-items: flex-start; justify-content: center; height: 43px; }
.cap { flex: none; line-height: 16px; }
.two .cap { line-height: 10px; padding-top: 3px; }
.bcaret { margin-top: 2px; }
.col { width: 23px; }
.mini { width: 23px; height: 23px; }
.car { width: 12px; height: 69px; }
.car.low { padding-top: 46px; }
.sep { width: 1px; height: 68px; margin: 0 3px; background: #dcdcdc; }
.config { padding-left: 1px; }
.c-row { display: flex; align-items: center; height: 38px; }
.c-row + .c-row { height: 23px; }
.combo { position: relative; display: flex; align-items: center; margin-right: 1px; }
.combo select { box-sizing: border-box; width: 130px; height: 23px; border: 1px solid #dcdcdc; border-radius: 0; background: #fff; appearance: none; }
.combo svg { position: absolute; right: 4px; }

.work { position: relative; flex: 1; display: flex; min-height: 0; }
.side { box-sizing: border-box; flex: none; width: 29px; background: #f4f4f4; display: flex; flex-direction: column; color: #2b579a; }
.right { padding-left: 5px; }
.s-top { width: 24px; height: 16px; margin-top: 9px; }
.s-text { writing-mode: vertical-rl; text-orientation: sideways; width: 22px; height: 44px; padding-top: 4px; justify-content: flex-start; white-space: pre; }
.right .s-text { height: 98px; font-family: "Liberation Mono", "Noto Sans CJK SC", monospace; }
.right .s-text span { font-size: 10px; }
.s-list { margin-top: 91px; }
.s-list button { width: 24px; height: 34px; }
.right .s-list { margin-top: 1px; }

.center { flex: 1; min-width: 0; display: flex; flex-direction: column; }
.doctabs { display: flex; align-items: flex-end; height: 30px; border-bottom: 1px solid #2b579a; flex: none; }
.doctab { display: flex; align-items: center; box-sizing: border-box; width: 98px; height: 28px; margin-left: 2px; padding-left: 17px; background: #2b579a; color: #fff; }
.doctab span { margin-left: 3px; }
.doctab button { margin-left: auto; padding-right: 4px; }
.docctl { display: flex; margin: 0 1px 10px auto; }
.docctl button { width: 14px; height: 14px; }
.canvas { position: relative; flex: 1; min-height: 0; background: #fafcfb; }
.grip { box-sizing: border-box; width: 250px; height: 9px; border: 1px solid #8c8c8c; background: linear-gradient(#e6e6e6, #c4c4c4); display: flex; gap: 2px; align-items: center; justify-content: center; }
.grip i { width: 2px; height: 2px; background: #3f6cb4; }
.tree { list-style: none; padding: 1px 0 0 4px; color: #000; }
.tree li { display: flex; align-items: center; height: 16px; }
.kid { padding-left: 7px; }
.node { box-sizing: border-box; display: flex; align-items: center; gap: 1px; height: 15px; padding: 0 3px 0 1px; border: 1px solid #a9bcc4; background: linear-gradient(#fff, #e4ecf0); line-height: 15px; }
.gap { margin: 0 2px 0 4px; }
.dim { color: #777; }
.exp { box-sizing: border-box; width: 9px; height: 9px; border: 1px solid #999; background: #fff; color: #000; font: 700 9px/7px "Liberation Sans", sans-serif; }
.tree input { appearance: none; box-sizing: border-box; width: 13px; height: 12px; margin: 0 3px 0 6px; border: 1px solid #2b4f86; background: #fff; display: flex; align-items: center; justify-content: center; }
.tree input:checked::after { content: ""; width: 6px; height: 3px; margin-bottom: 2px; border: solid #1c3c78; border-width: 0 0 2px 2px; transform: rotate(-45deg); }
.axes { position: absolute; left: 50%; top: 50%; transform: translate(-50%, -50%); }
.note { position: absolute; left: 3px; bottom: 100px; color: #000; }
.note i { display: block; width: 21px; height: 4px; margin-bottom: 1px; background: #ffa64d; }
.note p { padding: 0 3px 0 15px; border: 1px solid #a9bcc4; background: linear-gradient(#fff, #e4ecf0); line-height: 12px; }
.cube { position: absolute; right: 30px; bottom: 25px; }

.prompt { flex: none; display: flex; height: 25px; border-top: 1px solid #d0d0d0; background: #fff; }
.p-title { display: flex; align-items: center; gap: 5px; padding: 4px 5px 0 5px; color: #2b579a; height: 21px; }
.p-text { flex: 1; min-width: 0; margin-top: 3px; border: solid #999; border-width: 1px 0 0 1px; padding-left: 1px; color: #000; font-size: 13px; line-height: 26px; height: 21px; overflow: hidden; white-space: nowrap; }
.p-thumb { width: 15px; margin-top: 3px; border-top: 1px solid #999; background: #f0f0f0; }
.p-ctl { display: flex; align-items: center; padding: 4px 0 0 6px; margin-right: 1px; color: #111; }
.p-ctl button { width: 16px; height: 18px; }
.p-ctl .fa { font: 700 16px/18px "Liberation Serif", serif; }
.p-ctl .fa.sm { font-size: 12px; padding-top: 4px; height: 14px; }
.fa sup { font-size: 8px; line-height: 8px; align-self: flex-start; }

.status { flex: none; display: flex; align-items: center; height: 22px; background: #2b579a; color: #fff; }
.s-msg { margin-left: auto; margin-right: 128px; }
.find { box-sizing: border-box; width: 140px; height: 19px; margin-right: 1px; padding: 0 1px; border: 0; background: #fff; font: inherit; color: #333; }
.find::placeholder { color: #aaa; opacity: 1; }
.st { width: 22px; height: 22px; }
.st.last { width: 26px; margin-right: 16px; }
.zoom { appearance: none; width: 112px; height: 16px; margin: 0; background: linear-gradient(#fff, #fff) no-repeat center / 100% 1px; }
.zoom::-webkit-slider-thumb { appearance: none; width: 9px; height: 13px; border: 1px solid #e8f0fa; border-radius: 1px 1px 5px 5px; background: linear-gradient(90deg, #7c9cc8 45%, #fff 45% 55%, #7c9cc8 55%); }

.mark { position: absolute; right: 2px; top: 295px; text-align: right; font: 16px/20px "Noto Sans", "Noto Sans CJK SC", sans-serif; color: #8f8a8a; text-shadow: 2px 2px 2px #f7c9c9; pointer-events: none; }
</style>
